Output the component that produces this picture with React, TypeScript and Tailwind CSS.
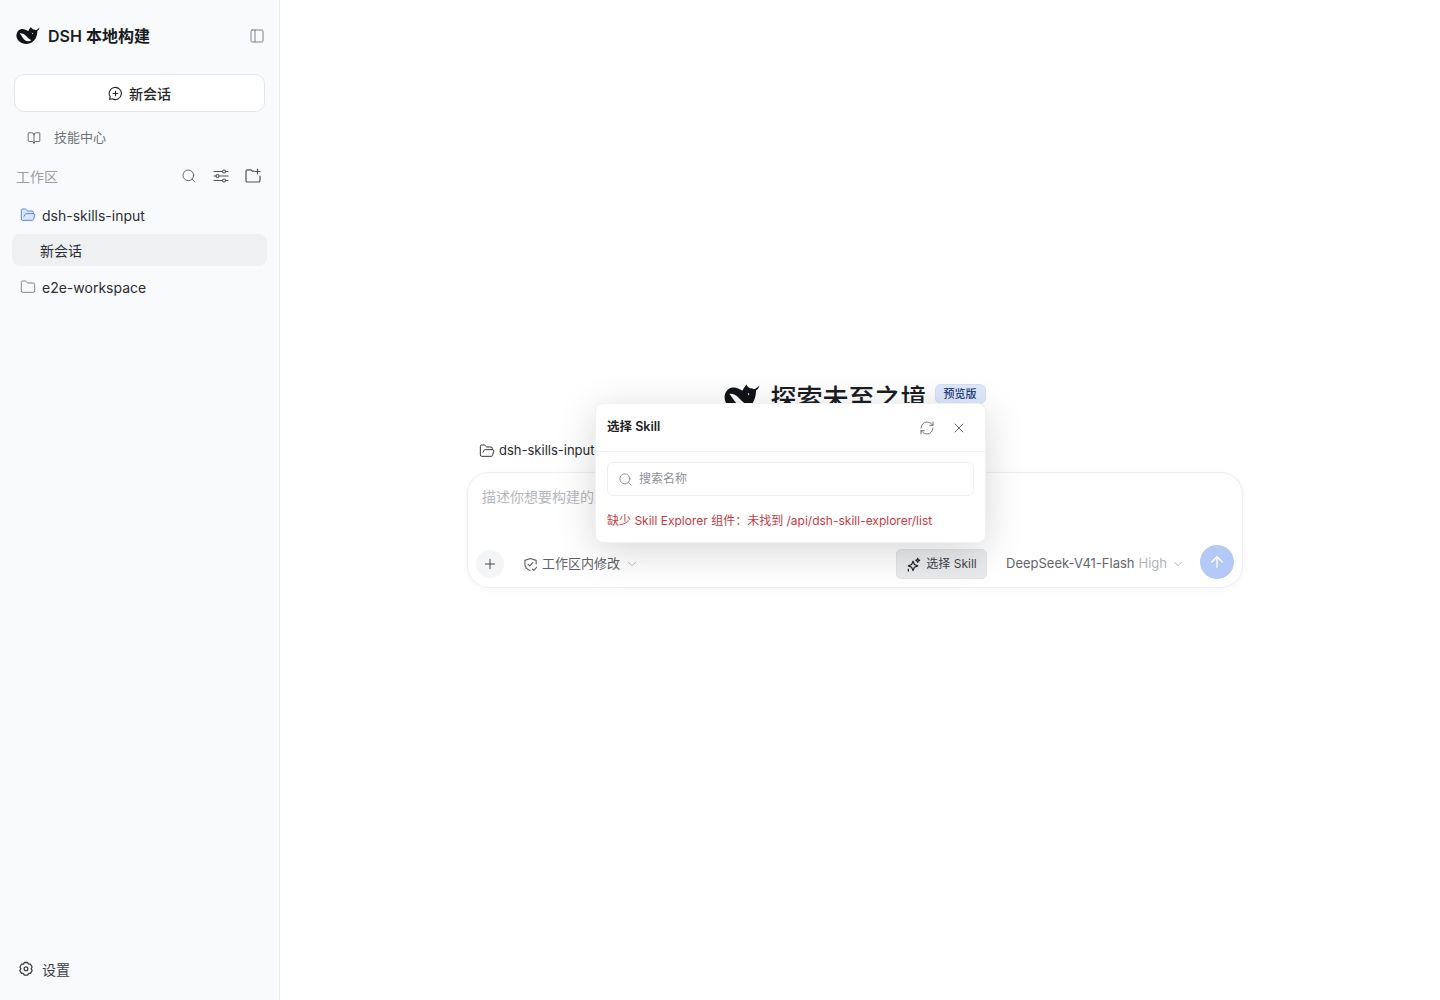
import React from 'react';
import { ArrowUp, BookOpen, ChevronDown, Folder, FolderOpen, PanelLeft, Plus, RefreshCw, Search, X } from 'lucide-react';

function WhaleLogo({ className }: { className?: string }) {
  return (
    <svg viewBox="0 0 24 20" className={className}>
      <path
        fill="#111318"
        d="M23.6 1.6c-.3 1.4-1 2.6-2.2 3.2-.1 2.6-.5 5.4-2 8-1.8 3-5 5.2-9 5.2C5 18 .4 14.400.4 9.600.4 6.400 2.300 3.900 4.800 3.200c2.600-.7 5.200.4 7.400 2 .7-1.300 1.600-2.900 2.700-4.200.6 1.100 1.300 2 2.500 2.500 1-.1 1.700.2 2.500.7.900-.2 2.300-1.300 3.700-2.600z"
      />
      <path
        fill="#f9fafc"
        d="M3.600 7.300c1.800-.4 4 .3 6 2.300 1.800 1.800 3.500 3.700 5.800 4.700-1.300 1-3 1.300-4.700.8-2-.7-3.300-2.500-4.500-4.200-.8-1.100-1.500-2.400-2.600-3.600zM15.800 6.600l1.300.8-1 .8z"
      />
    </svg>
  );
}

function IconCirclePlus() {
  return (
    <svg viewBox="0 0 16 16" fill="none" stroke="currentColor" strokeWidth="1.2" strokeLinecap="round" className="w-[15px] h-[15px]">
      <path d="M2.300 11.400A6.500 6.500 0 1 1 4.600 13.600L1.900 14.100z" />
      <path d="M8 5.600v4.800M5.600 8h4.800" />
    </svg>
  );
}

function IconSliders() {
  return (
    <svg viewBox="0 0 16 16" fill="none" stroke="currentColor" strokeWidth="1.100" strokeLinecap="round" className="w-4 h-4">
      <path d="M1 3.500h8.500M12.500 3.500H15M1 8h2M6 8h9M1 12.500h8.500M12.500 12.500H15" />
      <circle cx="11" cy="3.500" r="1.500" />
      <circle cx="4.500" cy="8" r="1.500" />
      <circle cx="11" cy="12.500" r="1.500" />
    </svg>
  );
}

function IconFolderPlus() {
  return (
    <svg viewBox="0 0 16 16" fill="none" stroke="currentColor" strokeWidth="1.200" strokeLinecap="round" strokeLinejoin="round" className="w-4 h-4">
      <path d="M9 3.200H7.300L6 1.800H2.600A1.600 1.600 0 0 0 1 3.400v9A1.600 1.600 0 0 0 2.600 14h10.800a1.600 1.600 0 0 0 1.600-1.600V8" />
      <path d="M12.500 1v5M10 3.500h5" />
    </svg>
  );
}

function IconShield() {
  return (
    <svg viewBox="0 0 16 16" fill="none" stroke="currentColor" strokeWidth="1.200" strokeLinecap="round" strokeLinejoin="round" className="w-[15px] h-[15px]">
      <path d="M14 7.500V3.600L8 1.500 2 3.600v4.200c0 3.300 2.500 5.500 5.500 6.700" />
      <path d="M5.400 7.800 7.200 9.500 10.500 6M10 13l1.500 1.300L14.500 11" />
    </svg>
  );
}

function IconSparkle() {
  return (
    <svg viewBox="0 0 16 16" fill="none" stroke="currentColor" strokeWidth="1.300" strokeLinejoin="round" strokeLinecap="round" className="w-[15px] h-[15px]">
      <path d="M7.500 4.500 9 8l3.500 1.500L9 11l-1.500 3.500L6 11 2.500 9.500 6 8z" />
      <path d="M12.500 1.500 13.200 3l1.300.6-1.300.6-.7 1.500-.7-1.500-1.300-.6 1.300-.6zM2.500 13v2" />
    </svg>
  );
}

function IconGear() {
  return (
    <svg viewBox="0 0 16 16" fill="none" stroke="currentColor" strokeWidth="1.300" strokeLinejoin="round" className="w-4 h-4">
      <path d="M6.400 1.500h3.200l1 1.600 1.900.1 1.600 2.800-.9 1.800.9 1.800-1.600 2.800-1.900.1-1 1.600H6.400l-1-1.600-1.900-.1-1.600-2.800.9-1.800-.9-1.800 1.600-2.800 1.900-.1z" />
      <circle cx="8" cy="7.800" r="1.900" />
    </svg>
  );
}

function Sidebar() {
  return (
    <aside className="w-[280px] shrink-0 h-full bg-[#f9fafc] border-r border-[#e9eaee] flex flex-col">
      <div className="mt-5 h-8 pl-4 pr-4 flex items-center justify-between">
        <div className="flex items-center gap-2">
          <WhaleLogo className="w-6 h-5" />
          <span className="text-[16px] font-semibold text-[#1b1d22]">DSH 本地构建</span>
        </div>
        <PanelLeft className="w-4 h-4 text-[#6b7078] mr-[-2px]" strokeWidth={1.3} />
      </div>

      <button className="mt-[22px] mx-[14px] h-[38px] rounded-[10px] bg-white border border-[#e3e5e9] flex items-center justify-center gap-[6px] text-[14px] font-medium text-[#23262b]">
        <IconCirclePlus />
        新会话
      </button>

      <div className="mt-[10px] h-8 pl-[27px] flex items-center gap-[13px] text-[13px] text-[#6f737a]">
        <BookOpen className="w-[14px] h-[14px] text-[#4b4f56]" strokeWidth={1.4} />
        技能中心
      </div>

      <div className="mt-[6px] h-8 pl-4 pr-[18px] flex items-center justify-between text-[#4e5259]">
        <span className="text-[14px] text-[#9a9ea5]">工作区</span>
        <div className="flex items-center gap-4">
          <Search className="w-4 h-4" strokeWidth={1.3} />
          <IconSliders />
          <IconFolderPlus />
        </div>
      </div>

      <div className="mt-[7px] h-8 pl-5 flex items-center gap-[6px] text-[14px] text-[#2a2d33]">
        <FolderOpen className="w-4 h-4 text-[#4d7cf0]" strokeWidth={1.4} fill="#dbe6fd" />
        dsh-skills-input
      </div>
      <div className="mt-[3px] mx-3 h-8 pl-7 rounded-lg bg-[#eff0f2] flex items-center text-[14px] text-[#2a2d33]">新会话</div>
      <div className="mt-[5px] h-8 pl-5 flex items-center gap-[6px] text-[14px] text-[#2a2d33]">
        <Folder className="w-4 h-4 text-[#71757c]" strokeWidth={1.3} />
        e2e-workspace
      </div>

      <div className="mt-auto mb-[15px] h-8 pl-[18px] flex items-center gap-2 text-[14px] text-[#3d4046]">
        <IconGear />
        设置
      </div>
    </aside>
  );
}

function SkillDialog() {
  return (
    <div className="absolute left-[128px] top-[25px] w-[391px] z-10 bg-white rounded-lg border border-[#f0f1f3] shadow-[0_8px_40px_rgba(0,0,0,0.16)]">
      <div className="h-[48px] pl-[11px] pr-[18px] flex items-center justify-between border-b border-[#f0f1f3]">
        <span className="text-[12.5px] font-semibold text-[#1b1d22]">选择 Skill</span>
        <div className="flex items-center gap-[16px] text-[#5e6269]">
          <RefreshCw className="w-4 h-4" strokeWidth={1.3} />
          <X className="w-4 h-4" strokeWidth={1.4} />
        </div>
      </div>
      <div className="px-[11px] pt-[10px] pb-[12px]">
        <div className="h-[34px] pl-[10px] rounded-md border border-[#eeeff2] flex items-center gap-[6px] text-[12px] text-[#8c9097]">
          <Search className="w-[15px] h-[15px] text-[#7a7e85]" strokeWidth={1.3} />
          搜索名称
        </div>
        <p className="mt-[16px] h-[18px] leading-[18px] text-[12px] text-[#c8393f]">缺少 Skill Explorer 组件：未找到 /api/dsh-skill-explorer/list</p>
      </div>
    </div>
  );
}

function Composer() {
  return (
    <div className="mt-[11px] w-full h-[116px] rounded-[22px] bg-white border border-[#eceef0] shadow-[0_2px_8px_rgba(0,0,0,0.04)] flex flex-col">
      <div className="pl-[14px] pt-[13px] h-[72px] text-[14px] leading-[22px] text-[#b4b7bc]">描述你想要构建的内容</div>
      <div className="flex-1 pl-2 pr-2 pb-2 flex items-end">
        <div className="w-7 h-7 mb-[1px] rounded-full bg-[#f4f5f7] flex items-center justify-center text-[#4a4d53]">
          <Plus className="w-4 h-4" strokeWidth={1.5} />
        </div>
        <div className="ml-[19px] h-[30px] flex items-center gap-[4px] text-[13px] text-[#5d6168]">
          <IconShield />
          工作区内修改
          <ChevronDown className="ml-[1px] w-[14px] h-[14px] text-[#a4a8ae]" strokeWidth={1.4} />
        </div>
        <div className="ml-auto h-[30px] w-[91px] rounded-[5px] bg-[#e9eaec] border border-[#e2e3e6] flex items-center justify-center gap-[5px] text-[12px] text-[#3f4248]">
          <span className="text-[#1f2126]"><IconSparkle /></span>
          选择 Skill
        </div>
        <div className="ml-[19px] h-[30px] flex items-center text-[13px] text-[#62666d]">
          DeepSeek-V41-Flash
          <span className="ml-1 text-[#b0b4ba]">High</span>
          <ChevronDown className="ml-[4px] w-[14px] h-[14px] text-[#a4a8ae]" strokeWidth={1.4} />
        </div>
        <div className="ml-[15px] w-[34px] h-[34px] rounded-full bg-[#b4c9f6] flex items-center justify-center text-white">
          <ArrowUp className="w-[18px] h-[18px]" strokeWidth={1.8} />
        </div>
      </div>
    </div>
  );
}

export default function App() {
  return (
    <div className="h-[1000px] flex bg-white overflow-hidden font-['Inter','Noto_Sans_CJK_SC',sans-serif]">
      <Sidebar />
      <main className="flex-1 pr-[10px] pt-[378px] flex justify-center">
        <div className="relative w-[776px] h-fit">
          <div className="h-10 flex items-center justify-center gap-[8px]">
            <WhaleLogo className="w-[36px] h-[30px]" />
            <h1 className="ml-[2px] text-[26px] font-medium text-[#1b1d22]">探索未至之境</h1>
            <span className="-translate-y-1 h-5 px-2 rounded-md bg-[#dfe8fb] border border-[#d3def6] flex items-center text-[11px] font-medium text-[#23407f]">预览版</span>
          </div>
          <div className="mt-[23px] h-5 pl-[12px] flex items-center gap-[4px] text-[13px] text-[#26292e]">
            <FolderOpen className="w-4 h-4" strokeWidth={1.4} />
            dsh-skills-input
          </div>
          <Composer />
          <SkillDialog />
        </div>
      </main>
    </div>
  );
}
